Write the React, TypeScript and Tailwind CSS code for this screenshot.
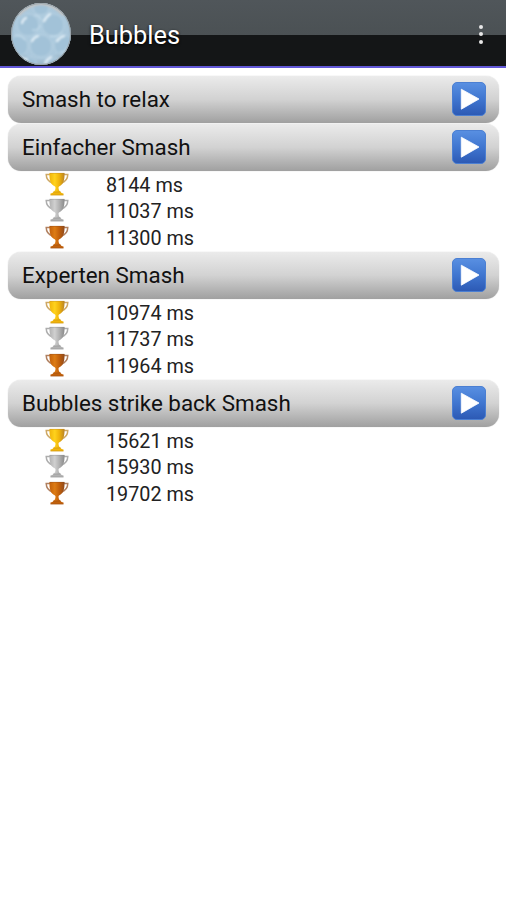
interface Level {
  title: string;
  times: string[];
}

interface TrophyColors {
  id: string;
  light: string;
  mid: string;
  dark: string;
}

const levels: Level[] = [
  { title: "Smash to relax", times: [] },
  { title: "Einfacher Smash", times: ["8144 ms", "11037 ms", "11300 ms"] },
  { title: "Experten Smash", times: ["10974 ms", "11737 ms", "11964 ms"] },
  {
    title: "Bubbles strike back Smash",
    times: ["15621 ms", "15930 ms", "19702 ms"],
  },
];

const trophies: TrophyColors[] = [
  { id: "gold", light: "#ffd21c", mid: "#f0b40a", dark: "#b98324" },
  { id: "silver", light: "#d0d0d0", mid: "#b2b2b2", dark: "#8a8a8a" },
  { id: "bronze", light: "#dd7c14", mid: "#c2600a", dark: "#8f4a1c" },
];

function BubbleLogo() {
  return (
    <svg viewBox="0 0 62 64" className="h-16 w-[62px] shrink-0">
      <defs>
        <radialGradient id="bubble" cx="50%" cy="45%" r="55%">
          <stop offset="0" stopColor="#adcbdf" />
          <stop offset="0.8" stopColor="#abc8dc" />
          <stop offset="1" stopColor="#9ab6c8" />
        </radialGradient>
        <clipPath id="disc">
          <ellipse cx="31" cy="32" rx="30" ry="31" />
        </clipPath>
        <filter id="soft" x="-20%" y="-20%" width="140%" height="140%">
          <feGaussianBlur stdDeviation="0.8" />
        </filter>
      </defs>
      <ellipse cx="31" cy="32" rx="30" ry="31" fill="url(#bubble)" />
      <g clipPath="url(#disc)" filter="url(#soft)" fill="none">
        <g fill="#a2c2d8" stroke="#b8d1e2" strokeWidth="1">
          <circle cx="18" cy="23" r="11" />
          <circle cx="43" cy="23" r="11" />
          <circle cx="31" cy="44" r="11" />
          <circle cx="8" cy="44" r="10" />
          <circle cx="54" cy="43" r="10" />
          <circle cx="31" cy="5" r="8" />
          <circle cx="19" cy="63" r="8" />
          <circle cx="45" cy="64" r="8" />
        </g>
        <g stroke="#e2eff7" strokeWidth="2.2" strokeLinecap="round">
          <path d="M34 19q2-4 6-7M22 39q2-4 6-5M47 39q3-4 7-5M35 61q2-4 6-6M12 21q1-4 4-5M12 56l5 2" />
        </g>
        <g stroke="#c8dfed" strokeWidth="1.1">
          <path d="M5 33q7 0 10 5M22 28q7 1 8-5M40 34q7 2 12-4M50 50q6 1 8-5M24 13q5 0 7 5" />
        </g>
        <path d="M8 13Q31-10 54 13" stroke="#c5c3c1" strokeWidth="3" />
      </g>
      <ellipse cx="31" cy="32" rx="29.5" ry="30.5" fill="none" stroke="#9ba4aa" strokeWidth="1" />
    </svg>
  );
}

function PlayIcon() {
  return (
    <svg viewBox="0 0 34 34" className="size-[34px]">
      <defs>
        <linearGradient id="play" x1="0" y1="0" x2="0" y2="1">
          <stop offset="0" stopColor="#5990e2" />
          <stop offset="0.5" stopColor="#4076d0" />
          <stop offset="1" stopColor="#2c59b4" />
        </linearGradient>
      </defs>
      <rect x="0.5" y="0.5" width="33" height="33" rx="4.5" fill="url(#play)" stroke="#4b7fd2" />
      <path d="M9.3 7.2L27 17L9.3 27.2Z" fill="#fff" stroke="#fff" strokeWidth="0.8" strokeLinejoin="round" />
    </svg>
  );
}

function Trophy({ id, light, mid, dark }: TrophyColors) {
  return (
    <svg viewBox="0 0 24 24" className="size-6">
      <defs>
        <linearGradient id={id} x1="0" y1="0" x2="1" y2="0">
          <stop offset="0" stopColor={mid} />
          <stop offset="0.35" stopColor={light} />
          <stop offset="0.65" stopColor={mid} />
          <stop offset="1" stopColor={dark} />
        </linearGradient>
      </defs>
      <path
        d="M5.5 2.6H1.2C1.3 7 3 9.6 7.5 11M18.5 2.6h4.3C22.7 7 21 9.6 16.5 11"
        fill="none"
        stroke={dark}
        strokeOpacity="0.7"
        strokeWidth="1.5"
      />
      <path
        d="M4.5 1h15c.2 6-.6 10.500-4.200 12.700-1.500.9-1.900 1.300-1.800 2.400.2 2 .8 3.200 2.300 3.900H8.200c1.500-.7 2.100-1.900 2.300-3.900.1-1.100-.3-1.500-1.800-2.400C5.100 11.500 4.300 7 4.500 1Z"
        fill={`url(#${id})`}
      />
      <path d="M8.500 19.800h7c.6 1 1.600 1.500 3 1.800V23.200h-13v-1.600c1.400-.3 2.400-.8 3-1.800Z" fill={mid} />
      <path d="M4.500 1.300h15M8.500 20h7M5.500 23h13" stroke={dark} strokeOpacity="0.6" strokeWidth="0.7" />
    </svg>
  );
}

function LevelItem({ title, times }: Level) {
  return (
    <section>
      <div className="mb-px flex h-[47px] items-center justify-between rounded-[13px] bg-linear-to-b from-[#ebebeb] via-[#d2d2d2] to-[#a0a0a0] pr-[13px] pl-3.5 shadow-[0_0_1px_#bbb]">
        <h2 className="pt-px text-[22.4px] leading-none text-[#111]">{title}</h2>
        <button type="button" aria-label={title}>
          <PlayIcon />
        </button>
      </div>
      {times.length > 0 && (
        <ul className="h-20">
          {times.map((time, i) => (
            <li key={time} className="flex h-[26.67px] items-start pl-[37px]">
              <Trophy {...trophies[i]} />
              <span className="ml-[37px] pt-1 text-[19.8px] leading-none text-[#222]">
                {time}
              </span>
            </li>
          ))}
        </ul>
      )}
    </section>
  );
}

export default function App() {
  return (
    <div className="min-h-screen bg-white font-[Roboto,sans-serif]">
      <header className="flex h-[68px] items-center border-b-2 border-[#6258d8] bg-linear-to-b from-[#50565a] from-0% via-[#4b5154] via-[53%] to-[#141617] to-[53%] pt-[2px] pr-[23px] pl-2.5">
        <BubbleLogo />
        <h1 className="mt-1 ml-[17px] text-[25.4px] leading-none text-white [text-shadow:0_1px_3px_#000]">
          Bubbles
        </h1>
        <button
          type="button"
          aria-label="Menu"
          className="ml-auto flex flex-col gap-[3.5px]"
        >
          <span className="size-1 rounded-full bg-[#e8e8e8]" />
          <span className="size-1 rounded-full bg-[#e8e8e8]" />
          <span className="size-1 rounded-full bg-[#e8e8e8]" />
        </button>
      </header>
      <main className="pt-[7.5px] pr-[7px] pl-2">
        {levels.map((level) => (
          <LevelItem key={level.title} {...level} />
        ))}
      </main>
    </div>
  );
}
